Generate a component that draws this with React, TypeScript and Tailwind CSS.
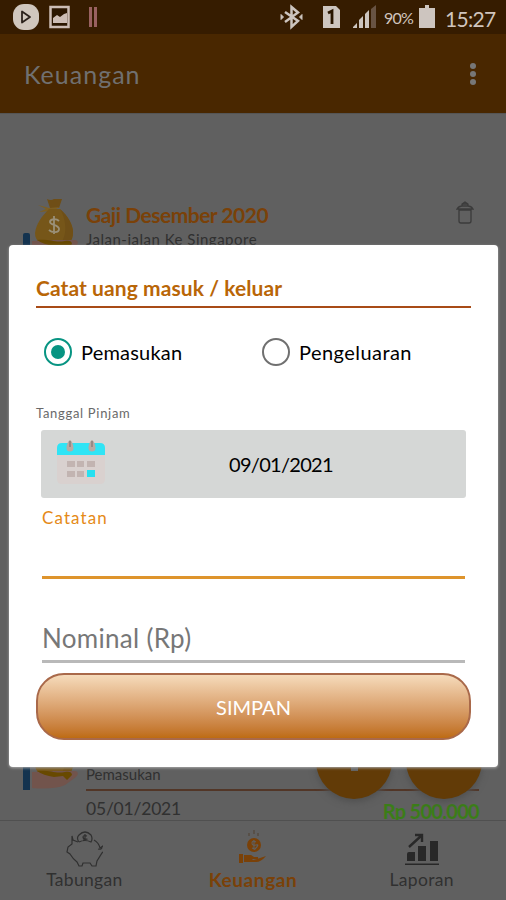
import React from "react";

function MoneyHand() {
  return (
    <svg width="56" height="60" viewBox="0 0 56 60" className="block">
      <path d="M16 0q4 2 7 0t8 0l-3 9H19z" fill="#6f4e16" />
      <path d="M7 6l11 3 11-1-8 4-13 1 7-3z" fill="#7d5f22" />
      <path d="M18 10h11c8 7 13 16 13 23 0 10-5 14-18 14S4 43 4 34c1-9 7-17 14-24z" fill="#765619" />
      <path d="M29 10c8 7 13 16 13 23 0 10-5 14-15 14 10-8 9-25 2-37z" fill="#6f4f17" />
      <path d="M28 22c-3-3-9-2-9 1s9 3 9 7-7 4-10 1M23 17v18" stroke="#9a9078" strokeWidth="1.800" fill="none" />
      <path d="M1 42l20-1h23c3 0 4 3 1 6l-11 8c-9 4-22 4-33 3z" fill="#72544c" />
      <path d="M6 41c14-1 18 3 28 1 4-1 7 0 7 3l-5 5-4-4-9 1c-7-1-13-3-17-6z" fill="#684900" />
    </svg>
  );
}

function HandRow() {
  return (
    <div className="flex h-[61px] w-[55px] shrink-0 overflow-hidden">
      <div className="mb-[1px] h-[26px] w-[7px] shrink-0 self-end rounded-t-[2px] bg-[#14334f]" />
      <div className="shrink-0 pl-[1px]"><MoneyHand /></div>
    </div>
  );
}

function Calendar() {
  return (
    <svg width="48" height="48" viewBox="0 0 48 48" className="block">
      <path d="M0 14h48v25q0 5-5 5H5q-5 0-5-5z" fill="#d9d1cf" />
      <path d="M0 15V8q0-5 5-5h38q5 0 5 5v7z" fill="#30e4f5" />
      <path d="M10 21h8v6h-8zM20 21h7v6h-7zM30 21h8v6h-8zM10 31h8v6h-8zM20 31h7v6h-7z" fill="#c2b4b1" />
      <path d="M30 30h8v7h-8z" fill="#26e0f0" />
      <path d="M13 0c2 1 3.500 5 3.500 8a3.500 3.500 0 0 1-7 0c0-3 1.500-7 3.500-8zM35 0c2 1 3.500 5 3.500 8a3.500 3.500 0 0 1-7 0c0-3 1.500-7 3.500-8z" fill="#b9aaa4" />
      <path d="M13 1v6M35 1v6" stroke="#8b807c" strokeWidth="1.500" />
    </svg>
  );
}

function StatusBar() {
  return (
    <div className="flex h-[34px] shrink-0 items-center bg-[#361c00] pl-[13px] text-[#d0c5be]">
      <svg width="90" height="28" viewBox="0 0 90 28">
        <rect x="0" y="1" width="26" height="26" rx="11" fill="#d0c7be" />
        <path d="M9 8.500v11l8-5.500z" fill="none" stroke="#2a211b" strokeWidth="1.800" strokeLinejoin="round" />
        <rect x="37.500" y="4" width="18" height="20" fill="#2b1600" stroke="#cdbdb5" strokeWidth="2.500" />
        <path d="M40 20v-5l4-3 3 2 4-3 3-1v10z" fill="#cdbdb5" />
        <path d="M77.500 4v20M82.500 4v20" stroke="#996161" strokeWidth="3" />
      </svg>
      <svg className="ml-[177px]" width="97" height="28" viewBox="0 0 97 28">
        <path d="M5 9l13 9-6.500 6V4L18 9.500 5 19" fill="none" stroke="#cdc5bf" strokeWidth="2.500" />
        <path d="M1 11.500l2.500 2.500L1 16.500zM22 11.500L19.500 14l2.500 2.500z" fill="#cdc5bf" stroke="#cdc5bf" />
        <path d="M43 3h13l4 4v18H43z" fill="#cdc5bf" />
        <path d="M48 10l4-2v13" fill="none" stroke="#291600" strokeWidth="2.800" />
        <path d="M73 25v-1l4-4v5zM79 25v-8l4-4v12zM85 25V11l4-4v18z" fill="#cdc5bf" />
        <path d="M91 25V6l5-4v23z" fill="#685343" />
      </svg>
      <span className="ml-[7px] w-[31px] whitespace-nowrap pt-[2px] text-[16px] leading-[20px] tracking-[-0.800px]">90%</span>
      <svg className="ml-[4px]" width="16" height="24" viewBox="0 0 16 24"><path d="M6 0h4v3h6v20H0V3h6z" fill="#cdc5bf" /></svg>
      <span className="ml-[10px] whitespace-nowrap pt-[3px] text-[21px] leading-[24px] tracking-[-0.700px]">15:27</span>
    </div>
  );
}

function NavItem({ label, active, children }: { label: string; active?: boolean; children: React.ReactNode }) {
  return (
    <div className={`flex flex-1 flex-col items-center pt-[8px] ${active ? "text-[#7a4108]" : "text-[#303030]"}`}>
      <div className="h-[40px]">{children}</div>
      <span className={`whitespace-nowrap leading-[22px] ${active ? "text-[19px] font-bold tracking-[0.600px]" : "text-[17.500px] tracking-[0.300px]"}`}>{label}</span>
    </div>
  );
}

export default function App() {
  return (
    <div className="relative flex h-[900px] w-[506px] flex-col overflow-hidden bg-[#606060] font-['Lato',sans-serif]">
      <StatusBar />
      <header className="flex h-[79px] shrink-0 items-center justify-between bg-[#492700] pl-[24px] pr-[30px] text-[#707070]">
        <h1 className="text-[25px] leading-[30px] tracking-[1px]">Keuangan</h1>
        <svg width="6" height="24" viewBox="0 0 6 24" fill="#777777"><circle cx="3" cy="4" r="3" /><circle cx="3" cy="12" r="3" /><circle cx="3" cy="20" r="3" /></svg>
      </header>

      <main className="flex h-[707px] shrink-0 flex-col justify-between border-t border-[#555555]">
        <article className="flex pl-[23px] pt-[85px]">
          <HandRow />
          <div className="ml-[8px] flex-1 pt-[2px]">
            <h2 className="whitespace-nowrap text-[21px] font-bold leading-[27px] tracking-[-0.500px] text-[#7a4108]">Gaji Desember 2020</h2>
            <p className="whitespace-nowrap text-[15px] leading-[23px] tracking-[0.500px] text-[#303030]">Jalan-jalan Ke Singapore</p>
          </div>
          <svg className="mr-[32px] mt-[2px]" width="18" height="24" viewBox="0 0 18 24" fill="none" stroke="#3b3b3b" strokeWidth="1.300">
            <path d="M3 9v11q0 2 2 2h8q2 0 2-2V9zM1 8q2-3 5-3h6q3 0 5 3zM6 5V3l3-2 3 2v2M6 3h6" />
          </svg>
        </article>

        <article className="flex pl-[23px]">
          <HandRow />
          <div className="ml-[8px] mr-[27px] flex-1 pt-[35px]">
            <p className="text-[15px] leading-[18px] tracking-[0px] text-[#303030]">Pemasukan</p>
            <div className="mt-[6px] h-[2px] bg-[#523627]" />
            <div className="flex h-[29px] items-start justify-between whitespace-nowrap pt-[6px]">
              <span className="text-[17.500px] leading-[24px] tracking-[-0.200px] text-[#303030]">05/01/2021</span>
              <span className="pt-[4px] text-[20px] font-bold leading-[20px] tracking-[-0.700px] text-[#3b7d18]">Rp 500.000</span>
            </div>
          </div>
        </article>
      </main>

      <div className="absolute left-[316px] top-[723px] h-[76px] w-[76px] rounded-full bg-[#623b07] shadow-[0_3px_7px_#505050]"><div className="mx-auto mt-[42px] h-[6px] w-[7px] bg-[#626262]" /></div>
      <div className="absolute left-[406px] top-[723px] h-[76px] w-[76px] rounded-full bg-[#623b07] shadow-[0_3px_7px_#505050]" />

      <nav className="flex h-[80px] shrink-0 border-t border-[#505050] bg-[#606060]">
        <NavItem label="Tabungan">
          <svg width="38" height="38" viewBox="0 0 38 38" fill="none" stroke="#303030" strokeWidth="1.200">
            <path d="M13 13L8 11 7 7v8l-4 3-1 5 3 2q3 5 7 8l2 4h3l1-3h7l2 3h4l1-5 5-8 3-3q1-3-2-4l-3 2q-1-5-6-8M33 20q4 1 4-2" />
            <path d="M14 13q-3-4 0-7 6-6 12 0 2 4 0 7-6-3-12 0M22 7q-4-1-4 1t3 2-3 1M20 5v7" />
          </svg>
        </NavItem>
        <NavItem label="Keuangan" active>
          <svg width="30" height="36" viewBox="0 0 30 36">
            <g fill="#7a4108"><circle cx="16" cy="16" r="7" /><path d="M1 25h4v9H1zM6 26h7l3 2h4v2h-6l1 1 4-1 9-3q-5 6-10 6H6z" /></g>
            <path d="M16 5V1M20 7V4M11 7V4" stroke="#504030" />
            <path d="M18 13q-4-2-4 1t4 2-1 4l-3-1M16 11v10" fill="none" stroke="#606060" strokeWidth="1.100" />
          </svg>
        </NavItem>
        <NavItem label="Laporan">
          <svg width="34" height="38" viewBox="0 0 34 38" fill="#282828"><path d="M2 25q0-2 2-2h6v9H2zM13 17h8v15h-8zM25 12h8v20h-8zM0 34.500h34V36H0z" /><path d="M4 18L16 7M10 6h7v7" fill="none" stroke="#282828" strokeWidth="2.400" /></svg>
        </NavItem>
      </nav>

      <section role="dialog" className="absolute left-[9px] top-[245px] flex h-[522px] w-[489px] flex-col rounded-[4px] bg-white px-[27px] shadow-[0_1px_3px_#aaaaaa]">
        <h2 className="mt-[29px] whitespace-nowrap text-[21px] font-bold leading-[28px] tracking-[0.080px] text-[#b96607]">Catat uang masuk / keluar</h2>
        <div className="mt-[4px] h-[2px] bg-[#a84b16]" />
        <div className="mt-[30px] flex h-[28px] items-center text-[20px] leading-[28px] text-black">
          <div className="flex w-[218px] items-center gap-[9px] pl-[8px]">
            <span className="flex h-[28px] w-[28px] shrink-0 items-center justify-center rounded-full border-[2.500px] border-[#079482]"><span className="h-[14px] w-[14px] rounded-full bg-[#079482]" /></span>
            <span className="tracking-[0.2px]">Pemasukan</span>
          </div>
          <div className="flex items-center gap-[9px] pl-[8px]">
            <span className="h-[28px] w-[28px] shrink-0 rounded-full border-[2.500px] border-[#707070]" />
            <span className="tracking-[0.450px]">Pengeluaran</span>
          </div>
        </div>
        <span className="mt-[38px] text-[13px] leading-[18px] tracking-[0.700px] text-[#696969]">Tanggal Pinjam</span>
        <div className="ml-[5px] mt-[8px] flex h-[68px] w-[425px] items-center rounded-[3px] bg-[#d5d7d6] pl-[16px]">
          <Calendar />
          <span className="ml-[124px] text-[20px] leading-[28px] tracking-[-0.700px] text-black">09/01/2021</span>
        </div>
        <label className="ml-[6px] mt-[9px] text-[17px] leading-[22px] tracking-[1.100px] text-[#e58a17]">Catatan</label>
        <div className="ml-[6px] mt-[47px] h-[3px] w-[423px] bg-[#de942c]" />
        <label className="ml-[6px] mt-[41px] text-[26px] leading-[36px] tracking-[0.300px] text-[#777777]">Nominal (Rp)</label>
        <div className="ml-[6px] mt-[4px] h-[3px] w-[423px] bg-[#b9b9b9]" />
        <button className="mt-[10px] h-[67px] w-[435px] shrink-0 rounded-[28px] border-2 border-[#a9694a] bg-linear-to-b from-[#f7dfc0] to-[#bc6800] bg-origin-border text-[20px] leading-[28px] tracking-[0px] text-white">SIMPAN</button>
      </section>
    </div>
  );
}
